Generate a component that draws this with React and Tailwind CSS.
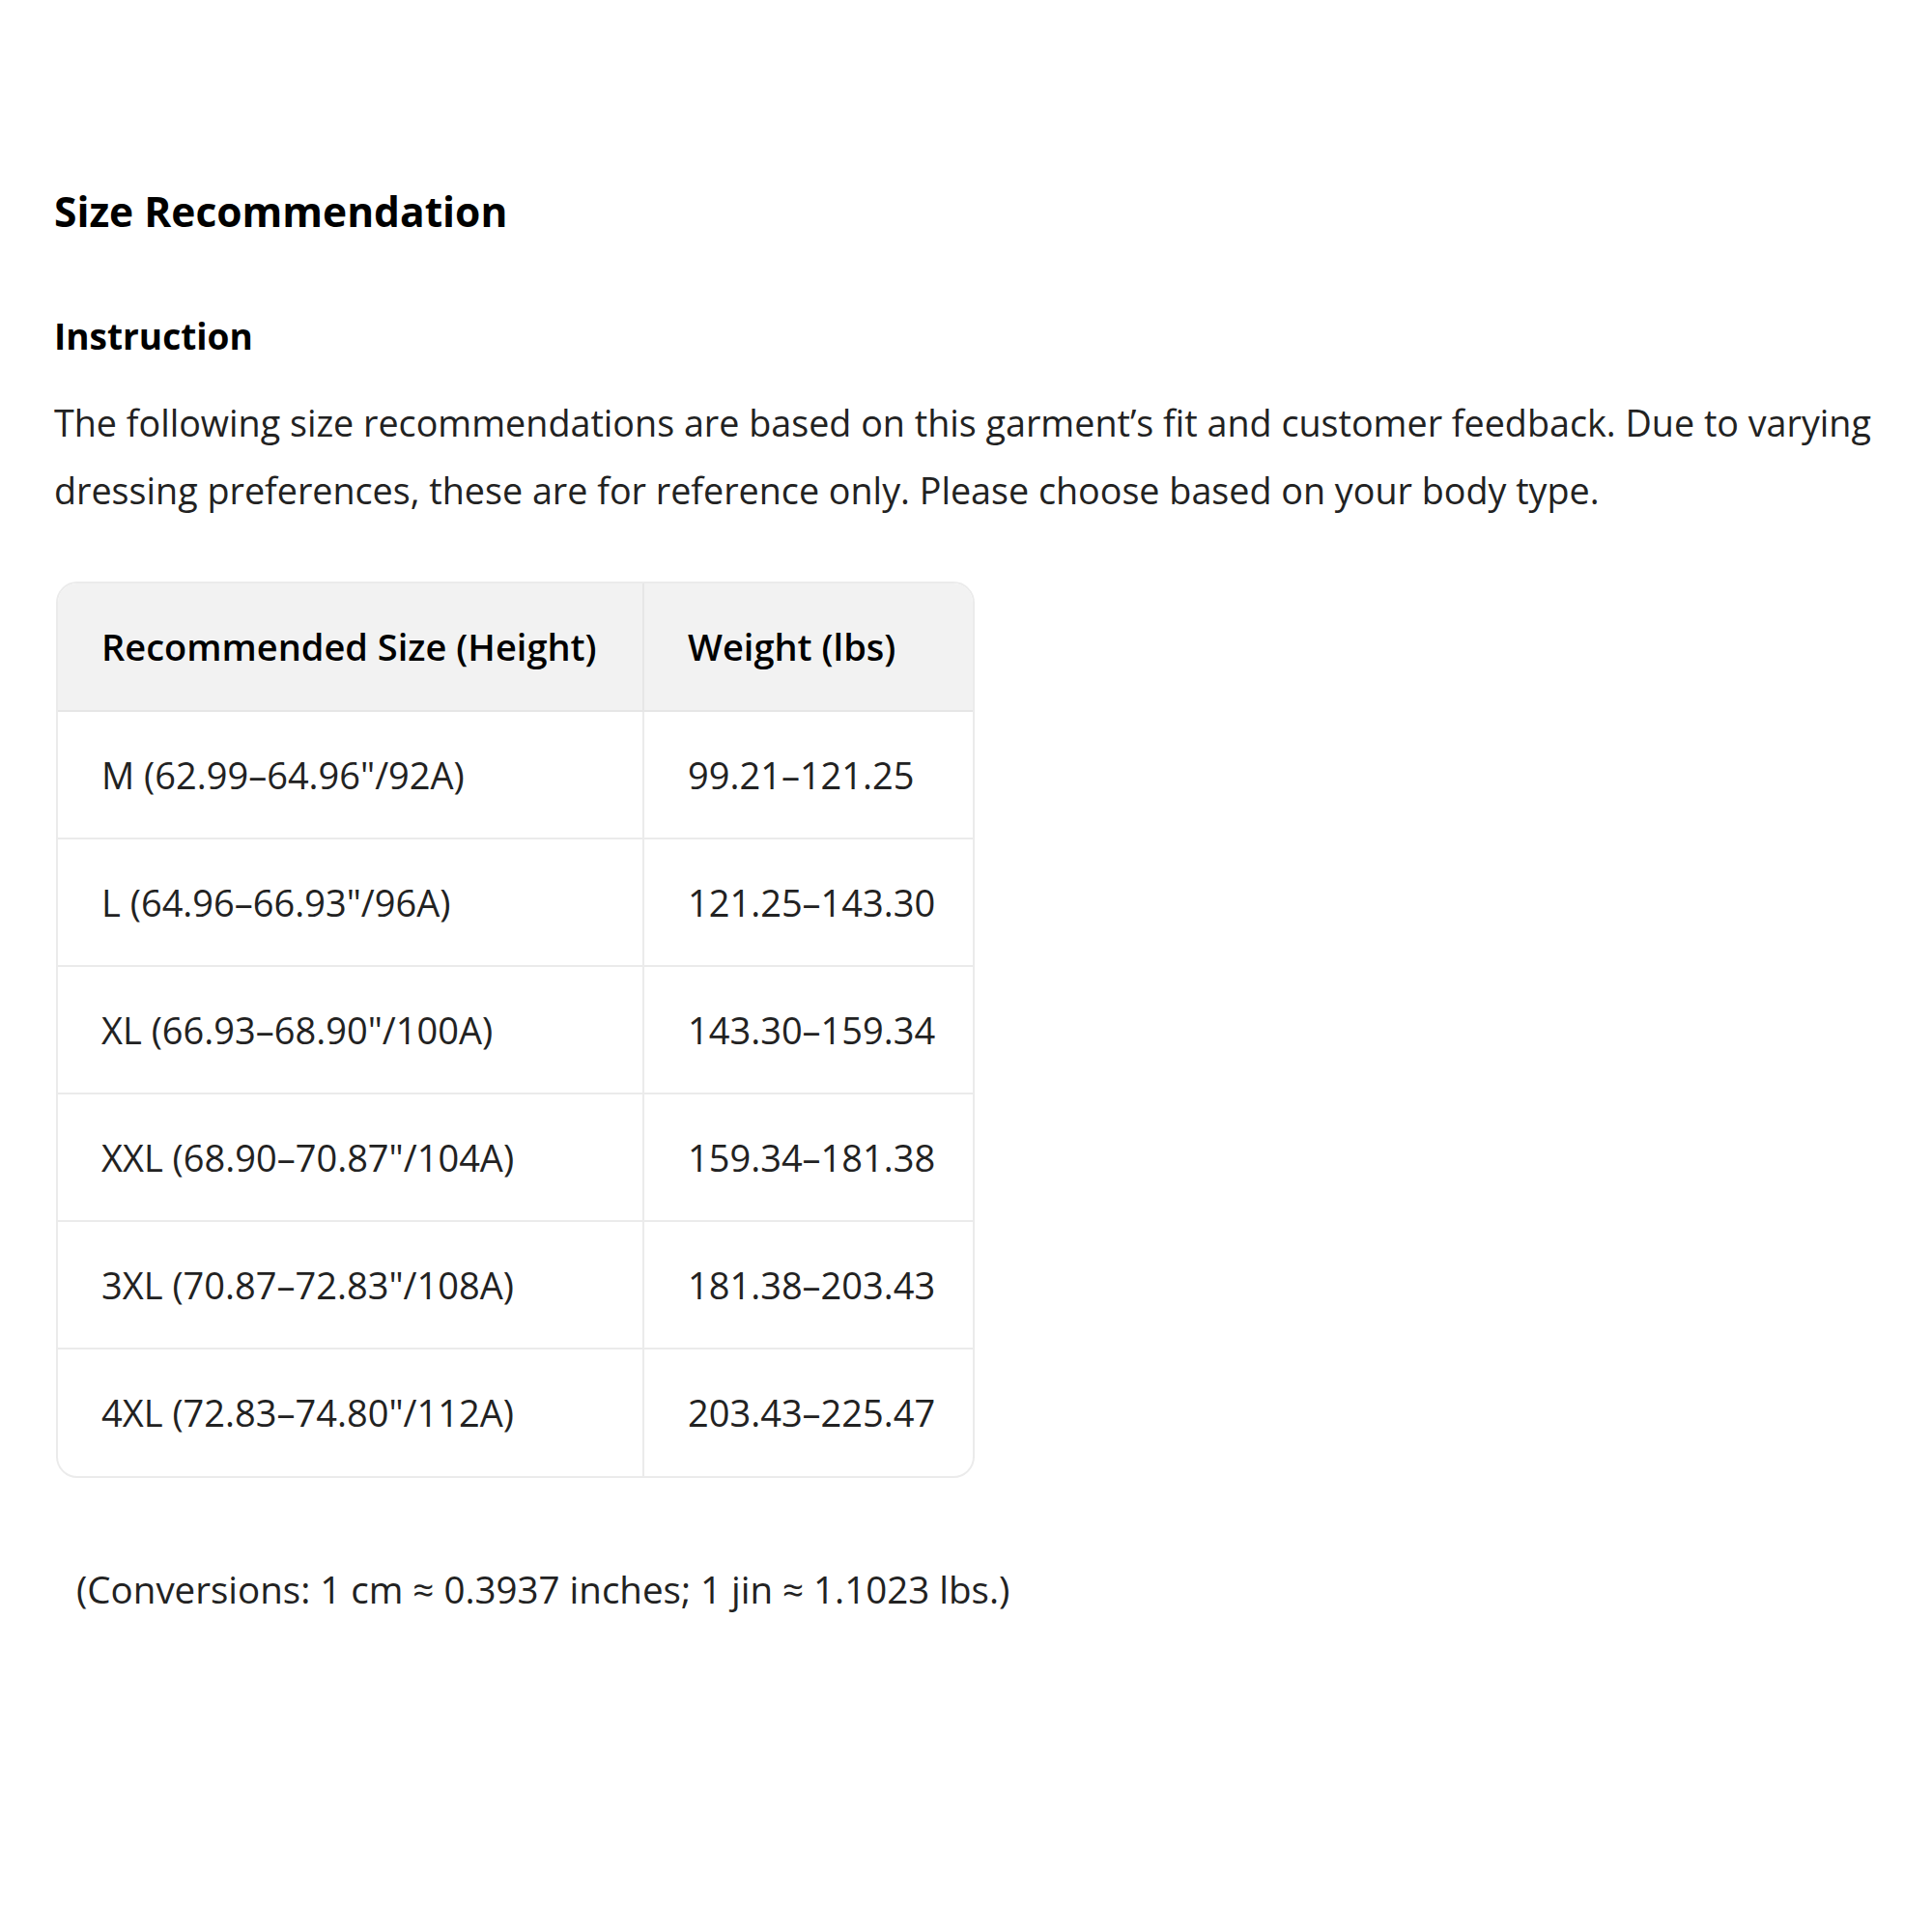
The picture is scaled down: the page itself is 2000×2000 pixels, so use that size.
const rows = [
  ["M (62.99–64.96\"/92A)", "99.21–121.25"],
  ["L (64.96–66.93\"/96A)", "121.25–143.30"],
  ["XL (66.93–68.90\"/100A)", "143.30–159.34"],
  ["XXL (68.90–70.87\"/104A)", "159.34–181.38"],
  ["3XL (70.87–72.83\"/108A)", "181.38–203.43"],
  ["4XL (72.83–74.80\"/112A)", "203.43–225.47"],
];

export default function App() {
  return (
    <div className="min-h-screen bg-white pl-[56px] pr-[30px] pt-[190px] text-[#222] font-['Open_Sans',sans-serif]">
      <h1 className="text-[42.5px] font-bold leading-[58px] text-black">Size Recommendation</h1>

      <h2 className="mt-[76px] text-[37px] font-bold leading-[48px] text-black">Instruction</h2>

      <p className="mt-[31px] text-[37.7px] leading-[70px]">
        The following size recommendations are based on this garment’s fit and customer feedback. Due to varying
        dressing preferences, these are for reference only. Please choose based on your body type.
      </p>

      <div className="mt-[59px] ml-[2px] w-[951px] overflow-hidden rounded-[22px] border-2 border-[#ebebeb]">
        <table className="w-full border-collapse text-[38px]">
          <thead>
            <tr className="h-[132px] bg-[#f2f2f2] text-black">
              <th className="w-[606px] border-b-2 border-r-2 border-[#e6e6e6] pl-[45px] text-left font-semibold">
                Recommended Size (Height)
              </th>
              <th className="border-b-2 border-[#e6e6e6] pl-[45px] text-left font-semibold">Weight (lbs)</th>
            </tr>
          </thead>
          <tbody>
            {rows.map(([size, weight], i) => (
              <tr key={size} className="h-[132px]">
                <td
                  className={`border-r-2 border-[#ebebeb] pl-[45px] ${i < rows.length - 1 ? "border-b-2" : ""}`}
                >
                  {size}
                </td>
                <td className={`border-[#ebebeb] pl-[45px] ${i < rows.length - 1 ? "border-b-2" : ""}`}>
                  {weight}
                </td>
              </tr>
            ))}
          </tbody>
        </table>
      </div>

      <p className="mt-[87px] pl-[23px] text-[38.5px]">(Conversions: 1 cm ≈ 0.3937 inches; 1 jin ≈ 1.1023 lbs.)</p>
    </div>
  );
}
